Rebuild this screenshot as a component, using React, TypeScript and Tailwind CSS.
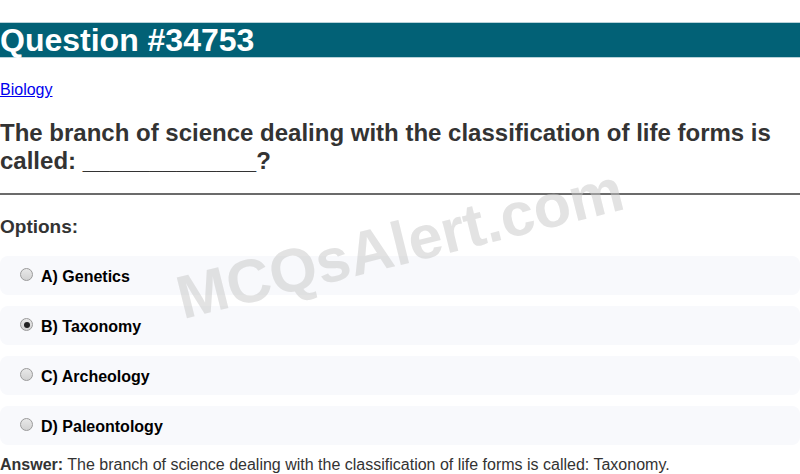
import React from "react";

const options = [
  { label: "A) Genetics", checked: false },
  { label: "B) Taxonomy", checked: true },
  { label: "C) Archeology", checked: false },
  { label: "D) Paleontology", checked: false },
];

function Radio({ checked }: { checked: boolean }) {
  return (
    <span className="-mt-[4px] flex h-[13px] w-[13px] shrink-0 items-center justify-center rounded-full border border-[#9a9a9a] bg-gradient-to-b from-[#e8e8e8] to-[#d2d2d2]">
      {checked ? <span className="h-[6px] w-[6px] rounded-full bg-[#222]" /> : null}
    </span>
  );
}

export default function App() {
  return (
    <div className="relative min-h-[474px] overflow-hidden bg-white font-['Liberation_Sans',Arial,sans-serif] text-[#333]">
      <div className="pt-[22px]">
        <h1 className="h-[36px] border-y border-[#b9d2d9] bg-[#026176] text-[32px] font-bold leading-[34px] text-white">
          Question #34753
        </h1>
      </div>
      <div className="mt-[20px]">
        <a href="#" className="text-[16px] leading-[18px] text-[#0000ee] underline">
          Biology
        </a>
      </div>
      <h2 className="mt-[17px] text-[24px] font-bold leading-[28px] text-[#333]">
        The branch of science dealing with the classification of life forms is called: _____________?
      </h2>
      <hr className="mt-[18px] border-t-2 border-[#6b6b6b]" />
      <div className="mt-[21px] text-[19px] font-bold leading-[22px] text-[#333]">Options:</div>
      <div className="mt-[18px] flex flex-col gap-[11px]">
        {options.map((o) => (
          <label
            key={o.label}
            className="flex h-[39px] items-center gap-[8px] rounded-[8px] bg-[#f8f9fc] pl-[20px] pt-[2px] text-[16px] font-bold text-black"
          >
            <Radio checked={o.checked} />
            <span>{o.label}</span>
          </label>
        ))}
      </div>
      <p className="mt-[10px] text-[16px] leading-[20px] text-[#333]">
        <span className="font-bold">Answer:</span> The branch of science dealing with the classification of life forms is called: Taxonomy.
      </p>
      <div className="pointer-events-none absolute left-[400px] top-[244px] -translate-x-1/2 -translate-y-1/2 -rotate-[14deg] whitespace-nowrap text-[61px] font-bold leading-none text-[#c8c8c8] opacity-50">
        MCQsAlert.com
      </div>
    </div>
  );
}
